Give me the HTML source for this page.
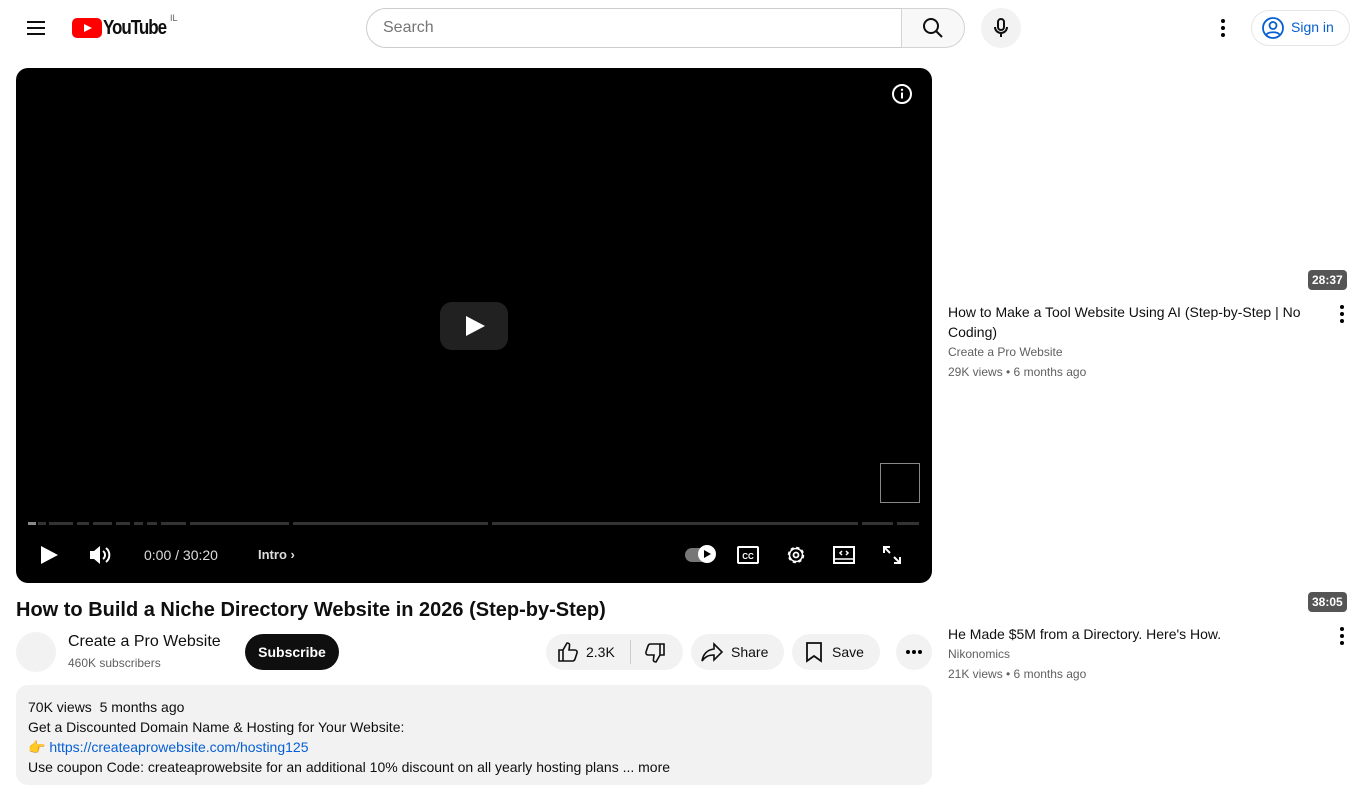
<!DOCTYPE html>
<html><head><meta charset="utf-8">
<style>
*{box-sizing:border-box;margin:0;padding:0}
body{width:1366px;height:768px;overflow:hidden;background:#fff;font-family:"Liberation Sans",Arial,sans-serif;color:#0f0f0f;position:relative}
.abs{position:absolute}
.btn{position:absolute;background:#f2f2f2;border-radius:18px;height:36px;display:flex;align-items:center;font-size:14px}
.side-t{font-size:14px;line-height:20px;color:#0f0f0f}
.side-s{font-size:12px;line-height:20px;color:#606060}
.badge{position:absolute;background:#555;color:#fff;font-size:12px;font-weight:bold;border-radius:4px;padding:2px 4px;height:20px;line-height:16px}
.seg{position:absolute;top:522px;height:3px;background:#333}
</style></head><body>
<svg class="abs" style="left:24px;top:16px" width="24" height="24" viewBox="0 0 24 24"><path d="M3 6h18M3 12h18M3 18h18" stroke="#0f0f0f" stroke-width="2"/></svg>
<svg class="abs" style="left:72px;top:18px" width="30" height="20" viewBox="0 0 30 20"><rect width="30" height="20" rx="5" fill="#f00"/><path d="M12 6l8 4-8 4z" fill="#fff"/></svg>
<div class="abs" style="left:103px;top:17px;font-size:20px;font-weight:bold;letter-spacing:-1.2px;transform:scaleX(.85);transform-origin:left">YouTube</div>
<div class="abs" style="left:170px;top:13px;font-size:9px;color:#606060">IL</div>
<div class="abs" style="left:366px;top:8px;width:536px;height:40px;border:1px solid #ccc;border-radius:20px 0 0 20px;border-right:none;padding-left:16px;line-height:38px;font-size:16px;color:#757575">Search</div>
<div class="abs" style="left:901px;top:8px;width:64px;height:40px;border:1px solid #d3d3d3;border-radius:0 20px 20px 0;background:#f8f8f8"></div>
<svg class="abs" style="left:921px;top:16px" width="24" height="24" viewBox="0 0 24 24"><circle cx="10" cy="10" r="7" fill="none" stroke="#0f0f0f" stroke-width="2"/><path d="M15 15l6 6" stroke="#0f0f0f" stroke-width="2"/></svg>
<div class="abs" style="left:981px;top:8px;width:40px;height:40px;border-radius:50%;background:#f2f2f2"></div>
<svg class="abs" style="left:989px;top:16px" width="24" height="24" viewBox="0 0 24 24"><rect x="9" y="3" width="6" height="11" rx="3" fill="none" stroke="#0f0f0f" stroke-width="2"/><path d="M6 11a6 6 0 0012 0M12 17v4" fill="none" stroke="#0f0f0f" stroke-width="2"/></svg>
<svg class="abs" style="left:1211px;top:16px" width="24" height="24" viewBox="0 0 24 24"><circle cx="12" cy="5" r="2"/><circle cx="12" cy="12" r="2"/><circle cx="12" cy="19" r="2"/></svg>
<div class="abs" style="left:1251px;top:10px;width:99px;height:36px;border:1px solid #e5e5e5;border-radius:18px"></div>
<svg class="abs" style="left:1261px;top:16px" width="24" height="24" viewBox="0 0 24 24" fill="none" stroke="#065fd4" stroke-width="1.8"><circle cx="12" cy="12" r="10"/><circle cx="12" cy="9.5" r="3.5"/><path d="M5.5 18.5c2-3 11-3 13 0"/></svg>
<div class="abs" style="left:1291px;top:19px;font-size:14px;color:#065fd4">Sign in</div>
<div class="abs" style="left:16px;top:68px;width:916px;height:515px;background:#000;border-radius:12px"></div>
<svg class="abs" style="left:890px;top:82px" width="24" height="24" viewBox="0 0 24 24"><circle cx="12" cy="12" r="9" fill="none" stroke="#fff" stroke-width="2"/><rect x="11" y="10.5" width="2" height="6" fill="#fff"/><circle cx="12" cy="7.8" r="1.2" fill="#fff"/></svg>
<div class="abs" style="left:440px;top:302px;width:68px;height:48px;border-radius:12px;background:#212121"></div>
<svg class="abs" style="left:464px;top:314px" width="22" height="24" viewBox="0 0 22 24"><path d="M2 2l19 10-19 10z" fill="#fff"/></svg>
<div class="abs" style="left:880px;top:463px;width:40px;height:40px;border:1px solid #888"></div>
<div class="seg" style="left:28px;width:8px;background:#888"></div>
<div class="seg" style="left:38px;width:8px"></div>
<div class="seg" style="left:49px;width:24px"></div>
<div class="seg" style="left:77px;width:12px"></div>
<div class="seg" style="left:93px;width:19px"></div>
<div class="seg" style="left:116px;width:14px"></div>
<div class="seg" style="left:134px;width:9px"></div>
<div class="seg" style="left:147px;width:10px"></div>
<div class="seg" style="left:161px;width:25px"></div>
<div class="seg" style="left:190px;width:99px"></div>
<div class="seg" style="left:293px;width:195px"></div>
<div class="seg" style="left:492px;width:366px"></div>
<div class="seg" style="left:862px;width:31px"></div>
<div class="seg" style="left:897px;width:22px"></div>
<svg class="abs" style="left:38px;top:544px" width="22" height="22" viewBox="0 0 22 22"><path d="M3 2l17 9-17 9z" fill="#fff"/></svg>
<svg class="abs" style="left:88px;top:543px" width="26" height="24" viewBox="0 0 26 24"><path d="M2 8h4l6-5v18l-6-5H2z" fill="#fff"/><path d="M15 8a5 5 0 010 8M18 5a9 9 0 010 14" fill="none" stroke="#fff" stroke-width="2"/></svg>
<div class="abs" style="left:144px;top:547px;color:#ddd;font-size:14px">0:00 / 30:20</div>
<div class="abs" style="left:258px;top:547px;color:#ddd;font-size:13px;font-weight:bold">Intro ›</div>
<div class="abs" style="left:685px;top:548px;width:30px;height:14px;border-radius:7px;background:#777"></div>
<div class="abs" style="left:698px;top:545px;width:18px;height:18px;border-radius:50%;background:#fff"></div>
<svg class="abs" style="left:702px;top:549px" width="10" height="10"><path d="M2 1l7 4-7 4z" fill="#000"/></svg>
<svg class="abs" style="left:736px;top:543px" width="24" height="24" viewBox="0 0 24 24"><rect x="2" y="4" width="20" height="16" rx="1" fill="none" stroke="#fff" stroke-width="2"/><text x="12" y="16" font-size="8" fill="#fff" text-anchor="middle" font-family="Liberation Sans" font-weight="bold">CC</text></svg>
<svg class="abs" style="left:784px;top:543px" width="24" height="24" viewBox="0 0 24 24"><circle cx="12" cy="12" r="7" fill="none" stroke="#fff" stroke-width="2.5" stroke-dasharray="3 2.5"/><circle cx="12" cy="12" r="6.5" fill="none" stroke="#fff" stroke-width="1.5"/><circle cx="12" cy="12" r="2.5" fill="none" stroke="#fff" stroke-width="1.8"/></svg>
<svg class="abs" style="left:832px;top:543px" width="24" height="24" viewBox="0 0 24 24"><rect x="2" y="4" width="20" height="16" fill="none" stroke="#fff" stroke-width="2"/><path d="M2 16h20M10 8l-2 2 2 2M14 8l2 2-2 2" fill="none" stroke="#fff" stroke-width="1.5"/></svg>
<svg class="abs" style="left:880px;top:543px" width="24" height="24" viewBox="0 0 24 24" fill="none" stroke="#fff" stroke-width="2"><path d="M4 10V4h6M4 4l6 6M20 14v6h-6M20 20l-6-6"/></svg>
<div class="abs" style="left:16px;top:598px;font-size:20px;font-weight:bold;line-height:24px">How to Build a Niche Directory Website in 2026 (Step-by-Step)</div>
<div class="abs" style="left:16px;top:632px;width:40px;height:40px;border-radius:50%;background:#f2f2f2"></div>
<div class="abs" style="left:68px;top:633px;font-size:16px">Create a Pro Website</div>
<div class="abs" style="left:68px;top:656px;font-size:12px;color:#606060">460K subscribers</div>
<div class="abs" style="left:245px;top:634px;width:94px;height:36px;border-radius:18px;background:#0f0f0f;color:#fff;font-size:14px;font-weight:bold;line-height:36px;text-align:center">Subscribe</div>
<div class="btn" style="left:546px;top:634px;width:137px"></div>
<svg class="abs" style="left:556px;top:640px" width="24" height="24" viewBox="0 0 24 24" fill="none" stroke="#0f0f0f" stroke-width="1.6"><path d="M3 10h4v11H3zM7 10l4-7c2 0 3 1 2.5 3L13 10h6c1.5 0 2.5 1.5 2 3l-2 6c-.4 1.2-1.3 2-2.5 2H7"/></svg>
<div class="abs" style="left:586px;top:644px;font-size:14px">2.3K</div>
<div class="abs" style="left:630px;top:640px;width:1px;height:24px;background:#ccc"></div>
<svg class="abs" style="left:643px;top:641px" width="24" height="24" viewBox="0 0 24 24" fill="none" stroke="#0f0f0f" stroke-width="1.6"><path d="M21 14h-4V3h4zM17 14l-4 7c-2 0-3-1-2.5-3L11 14H5c-1.5 0-2.5-1.5-2-3l2-6C5.4 3.8 6.3 3 7.5 3H17"/></svg>
<div class="btn" style="left:691px;top:634px;width:93px"></div>
<svg class="abs" style="left:700px;top:640px" width="24" height="24" viewBox="0 0 24 24" fill="none" stroke="#0f0f0f" stroke-width="1.6"><path d="M14 4l8 8-8 8v-5c-6 0-9 2-12 6 1-6 4-11 12-12z"/></svg>
<div class="abs" style="left:731px;top:644px;font-size:14px">Share</div>
<div class="btn" style="left:792px;top:634px;width:88px"></div>
<svg class="abs" style="left:802px;top:640px" width="24" height="24" viewBox="0 0 24 24" fill="none" stroke="#0f0f0f" stroke-width="1.8"><path d="M5 3h14v18l-7-5-7 5z"/></svg>
<div class="abs" style="left:832px;top:644px;font-size:14px">Save</div>
<div class="abs" style="left:896px;top:634px;width:36px;height:36px;border-radius:50%;background:#f2f2f2"></div>
<svg class="abs" style="left:902px;top:640px" width="24" height="24" viewBox="0 0 24 24"><circle cx="6" cy="12" r="2"/><circle cx="12" cy="12" r="2"/><circle cx="18" cy="12" r="2"/></svg>
<div class="abs" style="left:16px;top:685px;width:916px;height:100px;border-radius:12px;background:#f2f2f2;padding:12px;font-size:14px;line-height:20px">
<div>70K views&nbsp; 5 months ago</div>
<div>Get a Discounted Domain Name &amp; Hosting for Your Website:</div>
<div><span style="color:#f0a030">👉</span> <span style="color:#065fd4">https://createaprowebsite.com/hosting125</span></div>
<div>Use coupon Code: createaprowebsite for an additional 10% discount on all yearly hosting plans ... more</div>
</div>
<div class="badge" style="left:1308px;top:270px">28:37</div>
<div class="abs side-t" style="left:948px;top:302px;width:370px">How to Make a Tool Website Using AI (Step-by-Step | No Coding)</div>
<div class="abs side-s" style="left:948px;top:342px">Create a Pro Website</div>
<div class="abs side-s" style="left:948px;top:362px">29K views • 6 months ago</div>
<svg class="abs" style="left:1330px;top:302px" width="24" height="24" viewBox="0 0 24 24"><circle cx="12" cy="5" r="2"/><circle cx="12" cy="12" r="2"/><circle cx="12" cy="19" r="2"/></svg>
<div class="badge" style="left:1308px;top:592px">38:05</div>
<div class="abs side-t" style="left:948px;top:624px">He Made $5M from a Directory. Here's How.</div>
<div class="abs side-s" style="left:948px;top:644px">Nikonomics</div>
<div class="abs side-s" style="left:948px;top:664px">21K views • 6 months ago</div>
<svg class="abs" style="left:1330px;top:624px" width="24" height="24" viewBox="0 0 24 24"><circle cx="12" cy="5" r="2"/><circle cx="12" cy="12" r="2"/><circle cx="12" cy="19" r="2"/></svg>
</body></html>
